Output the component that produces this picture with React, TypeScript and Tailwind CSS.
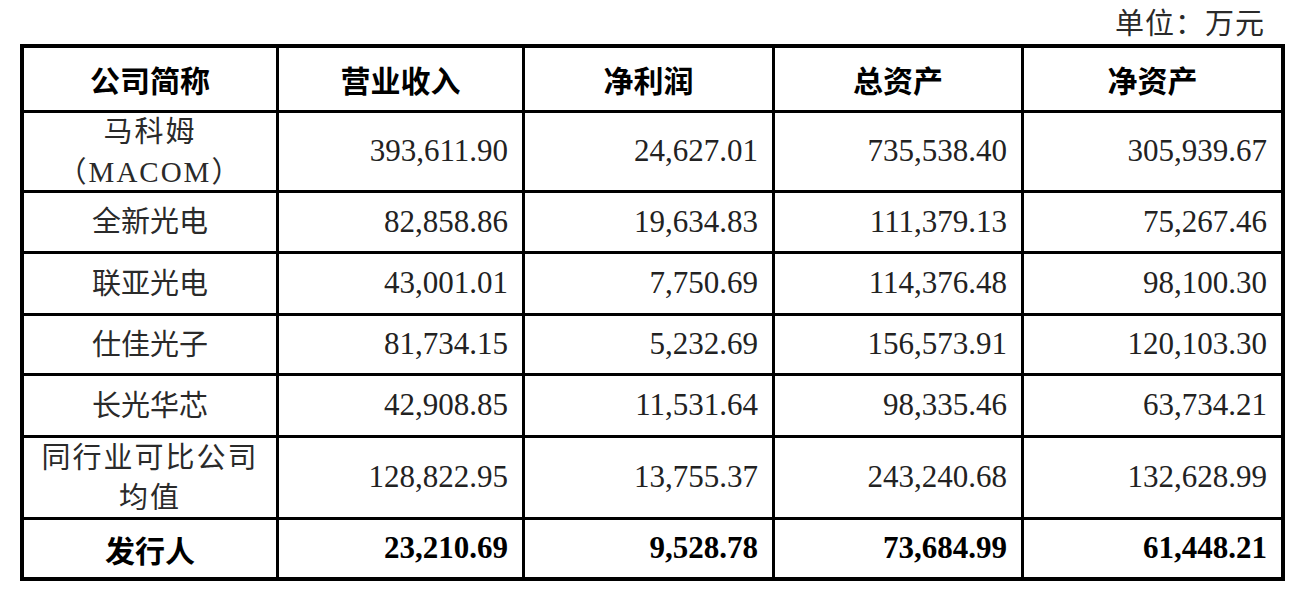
const serif = "font-['Liberation_Serif','Noto_Sans_CJK_SC',serif]";
const cjk = "font-['Noto_Sans_CJK_SC','Liberation_Sans',sans-serif]";

type Row = {
  name: string[];
  values: string[];
  bold?: boolean;
  h: string;
  spread?: boolean;
};

const headers = ["公司简称", "营业收入", "净利润", "总资产", "净资产"];

const rows: Row[] = [
  { name: ["马科姆", "（MACOM）"], values: ["393,611.90", "24,627.01", "735,538.40", "305,939.67"], h: "h-[77px]", spread: true },
  { name: ["全新光电"], values: ["82,858.86", "19,634.83", "111,379.13", "75,267.46"], h: "h-[58px]" },
  { name: ["联亚光电"], values: ["43,001.01", "7,750.69", "114,376.48", "98,100.30"], h: "h-[59px]" },
  { name: ["仕佳光子"], values: ["81,734.15", "5,232.69", "156,573.91", "120,103.30"], h: "h-[57px]" },
  { name: ["长光华芯"], values: ["42,908.85", "11,531.64", "98,335.46", "63,734.21"], h: "h-[59px]" },
  { name: ["同行业可比公司", "均值"], values: ["128,822.95", "13,755.37", "243,240.68", "132,628.99"], h: "h-[79px]", spread: true },
  { name: ["发行人"], values: ["23,210.69", "9,528.78", "73,684.99", "61,448.21"], bold: true, h: "h-[57px]" },
];

export default function App() {
  return (
    <div className="w-[1296px] h-[590px] overflow-hidden bg-white">
      {/* unit label */}
      <div className={`h-[44px] flex items-center justify-end pr-[31px] text-[29px] tracking-[1px] text-[#2a2a2a] ${cjk}`}>
        单位：万元
      </div>

      <div className="ml-[20px] w-[1265px] bg-black p-[4px] grid grid-cols-[252px_243px_247px_246px_257px] gap-[3px]">
        {headers.map((h) => (
          <div
            key={h}
            className={`h-[62px] bg-white flex items-center justify-center text-[30px] font-bold text-black ${cjk}`}
          >
            {h}
          </div>
        ))}

        {rows.map((r) => (
          <div key={r.name.join("")} className="contents">
            <div
              className={`${r.h} bg-white flex flex-col items-center justify-center leading-[40px] ${
                r.bold ? `font-bold text-black text-[30px] ${cjk}` : `text-[#2a2a2a] text-[29px] ${serif}`
              } ${r.spread ? "tracking-[2px]" : ""}`}
            >
              {r.name.map((n) => (
                <span key={n}>{n}</span>
              ))}
            </div>
            {r.values.map((v, i) => (
              <div
                key={i}
                className={`${r.h} bg-white flex items-center justify-end pr-[14px] text-[31px] ${serif} ${
                  r.bold ? "font-bold text-black" : "text-[#222]"
                }`}
              >
                {v}
              </div>
            ))}
          </div>
        ))}
      </div>
    </div>
  );
}
